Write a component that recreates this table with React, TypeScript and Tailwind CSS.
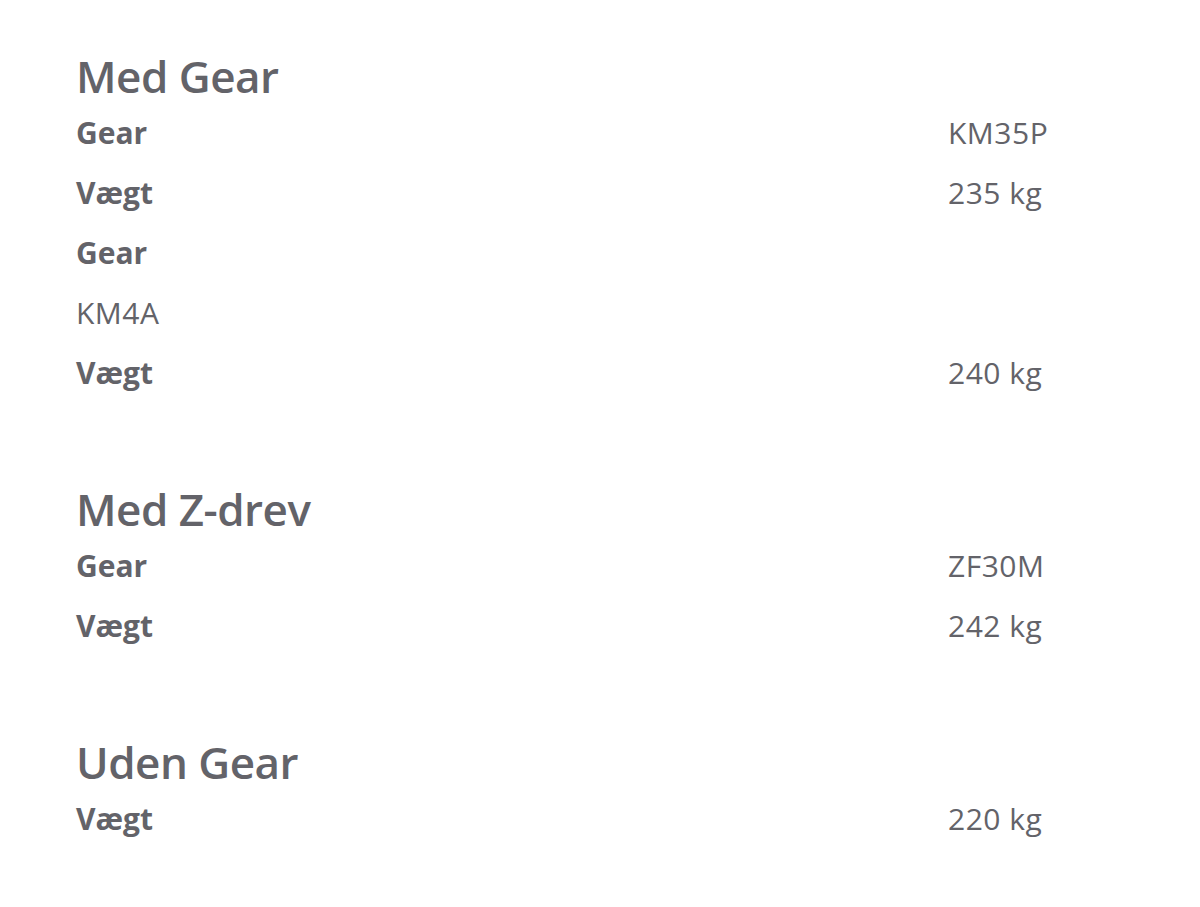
const SECTIONS: { title: string; rows: { label: string; value?: string; plain?: boolean }[] }[] = [
    {
        title: "Med Gear",
        rows: [
            { label: "Gear", value: "KM35P" },
            { label: "Vægt", value: "235 kg" },
            { label: "Gear" },
            { label: "KM4A", plain: true },
            { label: "Vægt", value: "240 kg" },
        ],
    },
    {
        title: "Med Z-drev",
        rows: [
            { label: "Gear", value: "ZF30M" },
            { label: "Vægt", value: "242 kg" },
        ],
    },
    {
        title: "Uden Gear",
        rows: [{ label: "Vægt", value: "220 kg" }],
    },
];

const App = () => {
    return (
        <div className="min-h-screen bg-white text-[#636369] font-['Open_Sans',sans-serif] pt-[50px] pl-[76px] pr-[60px]">
            {SECTIONS.map(section => (
                <section key={section.title} className="mb-[81px]">
                    <h2 className="text-[44px] leading-[52px] font-semibold tracking-[-0.5px]">{section.title}</h2>
                    <div className="flex flex-col">
                        {section.rows.map((row, i) => (
                            <div key={i} className="flex h-[60px] items-center text-[30px]">
                                <span
                                    className={`w-[872px] ${row.plain ? "font-normal tracking-[0.5px]" : "font-bold"}`}
                                >
                                    {row.label}
                                </span>
                                {row.value && <span className="tracking-[0.5px]">{row.value}</span>}
                            </div>
                        ))}
                    </div>
                </section>
            ))}
        </div>
    );
};

export default App;
